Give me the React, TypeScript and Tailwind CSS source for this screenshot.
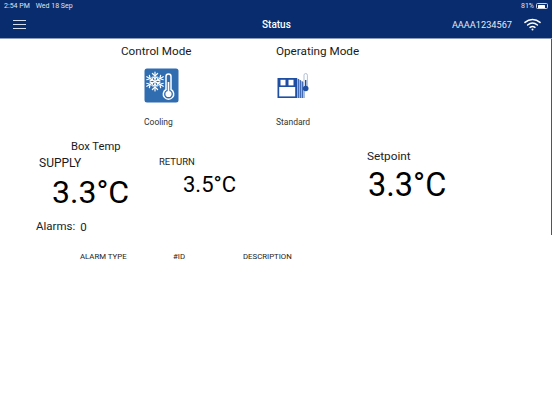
function Snowflake() {
  return (
    <g stroke="#fff" strokeWidth="1.2" fill="none" strokeLinecap="round">
      {[0, 60, 120].map((r) => (
        <g key={r} transform={`rotate(${r})`}>
          <path d="M0 -9.5V9.5" />
          <path d="M-2.6 -8L0 -5.6L2.6 -8M-2.6 8L0 5.6L2.6 8M-2 -4.6L0 -2.8L2 -4.6M-2 4.6L0 2.8L2 4.6" />
        </g>
      ))}
    </g>
  );
}

function CoolingIcon() {
  return (
    <svg width="35" height="35" viewBox="0 0 35 35">
      <rect x="0.5" y="0.5" width="34" height="34" rx="2.5" fill="#2f6cb0" />
      <g transform="translate(11 13.5)">
        <Snowflake />
      </g>
      <path d="M22 8.5a2.5 2.5 0 0 1 5 0V21.5a5.2 5.2 0 1 1-5 0Z" fill="#2f6cb0" stroke="#fff" strokeWidth="1.5" />
      <circle cx="24.5" cy="26" r="3.1" fill="#fff" />
      <rect x="23.7" y="14" width="1.6" height="10" fill="#fff" />
    </svg>
  );
}

function StandardIcon() {
  return (
    <svg width="36" height="35" viewBox="0 0 36 35">
      <rect x="0.5" y="10" width="19.5" height="20" fill="#1f4fa3" />
      <rect x="2.2" y="19" width="16" height="9.4" fill="#fff" />
      <rect x="3.5" y="11.8" width="5" height="5.6" fill="#fff" />
      <rect x="11.5" y="11.8" width="5" height="5.6" fill="#fff" />
      <path d="M20 10L28 15V30H20Z" fill="#a9bbdb" />
      <path d="M21.4 11V30M23.4 12.2V30M25.4 13.5V30" stroke="#2a58a8" strokeWidth="0.9" />
      <rect x="27" y="5.5" width="3.4" height="15" rx="1.7" fill="#fff" stroke="#a9b9d4" strokeWidth="0.9" />
      <circle cx="28.7" cy="20.5" r="2.8" fill="#1f4fa3" />
      <rect x="28" y="12" width="1.4" height="8" fill="#1f4fa3" />
    </svg>
  );
}

export default function App() {
  return (
    <div className="relative w-[552px] h-[414px] bg-white overflow-hidden font-['Roboto',sans-serif] text-black">
      <header className="h-[39px] bg-[#082c6e] border-b border-[#8d9cbc] text-white flex flex-col">
        <div className="h-[11px] px-[4px] pt-[1px] flex items-center justify-between text-[7px] leading-[10px] text-[#dfe5f0]">
          <div className="flex gap-[6px]">
            <span>2:54 PM</span>
            <span>Wed 18 Sep</span>
          </div>
          <div className="flex items-center gap-[2px]">
            <span>81%</span>
            <span className="w-[12px] h-[6px] rounded-[1.5px] border border-[#c9d2e2] p-[0.5px] block">
              <span className="block h-full w-[80%] bg-white rounded-[0.5px]" />
            </span>
          </div>
        </div>
        <div className="flex-1 flex items-center pl-[13px] pr-[11px]">
          <div className="w-[13px] flex flex-col gap-[2.5px]">
            <span className="block h-[1.5px] bg-[#d5dcea]" />
            <span className="block h-[1.5px] bg-[#d5dcea]" />
            <span className="block h-[1.5px] bg-[#d5dcea]" />
          </div>
          <div className="ml-[236px] w-[28px] text-center text-[10px] font-medium whitespace-nowrap">Status</div>
          <div className="ml-auto text-[9.2px] text-[#e6eaf3]">AAAA1234567</div>
          <svg className="ml-[12px]" width="17" height="13" viewBox="0 0 17 13" fill="none" stroke="#fff" strokeLinecap="round">
            <path d="M1 4.4C5.4 0.5 11.6 0.5 16 4.4" strokeWidth="1.5" />
            <path d="M3.6 7C6.6 4.5 10.4 4.5 13.4 7" strokeWidth="1.5" />
            <path d="M6 9.4C7.4 8.3 9.6 8.3 11 9.4" strokeWidth="1.4" />
            <circle cx="8.5" cy="11.5" r="1" fill="#fff" stroke="none" />
          </svg>
        </div>
      </header>

      <main className="flex flex-col">
        <section className="flex pt-[5px]">
          <div className="ml-[121px] w-[155px] shrink-0">
            <div className="text-[11.7px] leading-[15px] text-[#1a1a1a] whitespace-nowrap">Control Mode</div>
            <div className="ml-[23px] mt-[9px] h-[35px]">
              <CoolingIcon />
            </div>
            <div className="ml-[23px] mt-[14px] text-[8.5px] leading-[10px] text-[#333]">Cooling</div>
          </div>
          <div>
            <div className="text-[11.7px] leading-[15px] text-[#1a1a1a] whitespace-nowrap">Operating Mode</div>
            <div className="ml-[1px] mt-[9px] h-[35px]">
              <StandardIcon />
            </div>
            <div className="mt-[14px] text-[8.5px] leading-[10px] text-[#333]">Standard</div>
          </div>
        </section>

        <section className="flex mt-[13px]">
          <div className="w-[159px] shrink-0">
            <div className="pl-[71px] text-[11.2px] leading-[14px] text-[#1a1a1a]">Box Temp</div>
            <div className="pl-[39px] mt-[2px] text-[12px] leading-[14px] text-[#1a1a1a]">SUPPLY</div>
            <div className="pl-[52px] mt-[4px] text-[32px] leading-[37px] whitespace-nowrap">3.3°C</div>
          </div>
          <div className="w-[208px] shrink-0 pt-[16px]">
            <div className="text-[9.5px] leading-[12px] text-[#222]">RETURN</div>
            <div className="pl-[24px] mt-[4px] text-[22px] leading-[25px] whitespace-nowrap">3.5°C</div>
          </div>
          <div className="pt-[9px]">
            <div className="text-[11.8px] leading-[14px] text-[#222]">Setpoint</div>
            <div className="pl-[1px] mt-[4px] text-[32.5px] leading-[37px] whitespace-nowrap">3.3°C</div>
          </div>
        </section>

        <section className="flex items-center pl-[36px] mt-[7px] text-[11.5px] leading-[14px] text-[#222]">
          <span>Alarms:</span>
          <span className="ml-[5px] mt-[2px]">0</span>
        </section>

        <section className="flex pl-[80px] mt-[18px] text-[7.8px] leading-[10px] text-[#222]">
          <span className="w-[93px]">ALARM TYPE</span>
          <span className="w-[70px]">#ID</span>
          <span>DESCRIPTION</span>
        </section>
      </main>

      <div className="absolute right-0 top-[39px] h-[196px] w-[1px] bg-[#555]" />
    </div>
  );
}
